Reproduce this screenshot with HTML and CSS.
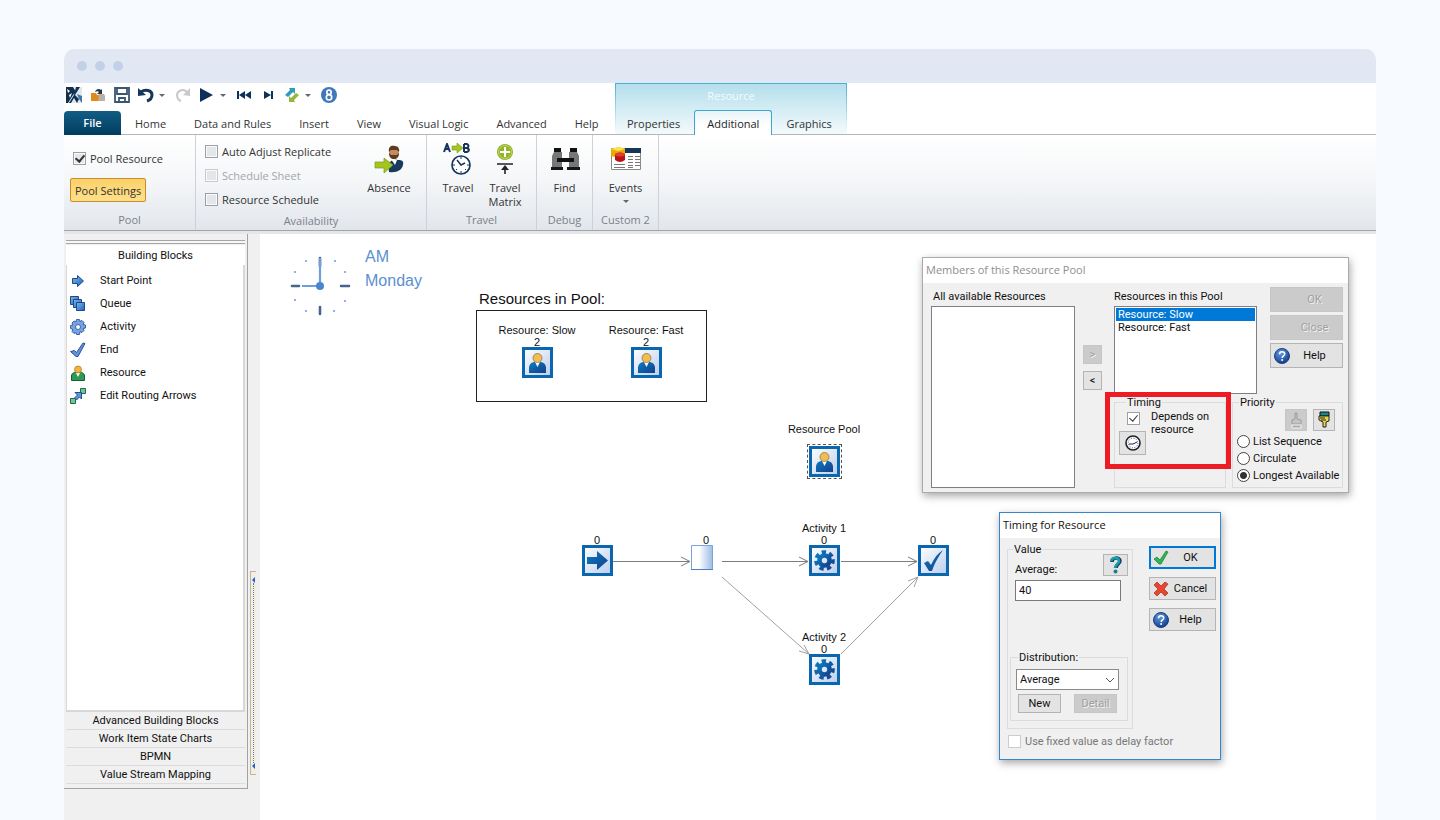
FILE: index.html
```
<!DOCTYPE html>
<html lang="en">
<head>
<meta charset="utf-8">
<title>Resource Pool</title>
<link rel="stylesheet" href="styles.css">
</head>
<body>
<svg class="defs" aria-hidden="true">
  <defs>
    <linearGradient id="blue" x1="0" y1="0" x2="1" y2="1"><stop offset="0" stop-color="#0a7cc0"/><stop offset="1" stop-color="#153f8c"/></linearGradient>
    <linearGradient id="pale" x1="0" y1="0" x2="1" y2="1"><stop offset="0" stop-color="#fff"/><stop offset="1" stop-color="#b9cdec"/></linearGradient>
    <linearGradient id="sky" x1="0" y1="0" x2="1" y2="1"><stop offset="0" stop-color="#7db8ee"/><stop offset="1" stop-color="#1f63b8"/></linearGradient>
    <linearGradient id="queue" x1="0" y1="0" x2="1" y2="0"><stop offset="0.35" stop-color="#fff"/><stop offset="1" stop-color="#9dbce6"/></linearGradient>
    <radialGradient id="ball" cx="0.4" cy="0.3" r="0.7"><stop offset="0" stop-color="#5e9be0"/><stop offset="1" stop-color="#143f92"/></radialGradient>
  </defs>
  <symbol id="frame" viewBox="0 0 31 31"><rect x="1.5" y="1.5" width="28" height="28" fill="url(#pale)" stroke="#0b66b0" stroke-width="3"/></symbol>
  <symbol id="person" viewBox="0 0 31 31"><use href="#frame"/><path d="M7 26v-5c0-4 3-6 6-6h5c3 0 6 2 6 6v5z" fill="url(#blue)"/><path d="M13 15h5l-2.500 5z" fill="#fff"/><circle cx="15.500" cy="11" r="4.500" fill="#f0bd55" stroke="#8b6a2c" stroke-width="0.700"/></symbol>
  <symbol id="gear" viewBox="0 0 31 31"><use href="#frame"/><g fill="none" stroke="url(#blue)"><circle cx="15.500" cy="15.500" r="5" stroke-width="4.600"/><circle cx="15.500" cy="15.500" r="8.200" stroke-width="4.200" stroke-dasharray="4.200 3.160" transform="rotate(-8 15.500 15.500)"/></g></symbol>
  <symbol id="start" viewBox="0 0 31 31"><use href="#frame"/><path d="M5 12h10V6l11 9.500L15 25v-6H5z" fill="url(#blue)"/></symbol>
  <symbol id="check" viewBox="0 0 31 31"><use href="#frame"/><path d="M6 18l4-2 3 4C16 13 20 8 25 5c-4 6-8 12-11 21h-3z" fill="url(#blue)"/></symbol>
  <symbol id="help" viewBox="0 0 16 16"><circle cx="8" cy="8" r="7.500" fill="url(#ball)" stroke="#1f3f78"/><path d="M5.500 6.200c0-3.400 5.200-3.200 5.200-.3 0 2-2.500 2-2.500 4" fill="none" stroke="#fff" stroke-width="1.600"/><circle cx="8.100" cy="12" r="1" fill="#fff"/></symbol>
</svg>

<div class="window">
  <div class="chrome"><i></i><i></i><i></i></div>

  <header class="head">
    <div class="head-main">
      <div class="quick">
        <button class="qb" aria-label="Application"><svg width="16" height="16" viewBox="0 0 16 16"><path d="M0 0h16v16H0z" fill="#dfe8ee"/><path d="M0 0h7l3 5-3 3-5 8H0z" fill="#10304f"/><path d="M10 0h4l-5 8 4 4-2 4-3-5-3 5H3l5-8z" fill="#10304f"/><path d="M1 2l3 2-2 2zM3 8l3-2-2 5z" fill="#fff"/><path d="M11 7l5 2v7l-3-4z" fill="#3f78a8"/></svg></button>
        <button class="qb q-gap" aria-label="Open"><svg width="16" height="16" viewBox="0 0 16 16"><path d="M1 6h5l1 2h2v6H1z" fill="#e08a1c"/><path d="M9 7h5l1 2v5H8z" fill="#b9b0a6"/><path d="M5 5c1-3 4-4 6-2l1-1v5H7l2-2c-1-1-2-1-4 0z" fill="#24384c"/></svg></button>
        <button class="qb q-gap" aria-label="Save"><svg width="16" height="16" viewBox="0 0 16 16" fill="none" stroke="#3a5674" stroke-width="1.800"><path d="M1 1h14v14H1zM3 1v6h10V1M5 15v-4h6v4"/></svg></button>
        <button class="qb q-gap" aria-label="Undo"><svg width="16" height="16" viewBox="0 0 16 16"><path d="M3 5c4-3 11-2 11 3 0 3-2 5-5 6" fill="none" stroke="#17365c" stroke-width="3"/><path d="M0 1v8l8-1z" fill="#17365c"/></svg></button>
        <span class="caret"></span>
        <button class="qb q-gap" aria-label="Redo"><svg width="16" height="16" viewBox="0 0 16 16"><path d="M12 5C8 1 2 4 2 8c0 3 1 5 4 6" fill="none" stroke="#c9c9c9" stroke-width="2"/><path d="M15 1v8l-7-1z" fill="#c9c9c9"/></svg></button>
        <button class="qb q-gap" aria-label="Run"><svg width="16" height="16" viewBox="0 0 16 16"><path d="M1 1l13 7-13 7z" fill="#0d3159"/></svg></button>
        <span class="caret"></span>
        <button class="qb q-gap" aria-label="Reset"><svg width="16" height="16" viewBox="0 0 16 16" fill="#0d3159"><path d="M1 4h2v8H1zM9 4v8L3 8zM15 4v8L9 8z"/></svg></button>
        <button class="qb q-gap" aria-label="Step"><svg width="16" height="16" viewBox="0 0 16 16" fill="#0d3159"><path d="M4 4l7 4-7 4zM11 4h2v8h-2z"/></svg></button>
        <button class="qb q-gap" aria-label="Routes"><svg width="16" height="16" viewBox="0 0 16 16"><path d="M1 8l5-5-1-2h6v6L9 5l-5 5z" fill="#2f9cbc"/><path d="M15 8l-5 5 1 2H5V9l2 2 5-5z" fill="#94b83a"/></svg></button>
        <span class="caret"></span>
        <button class="qb q-gap" aria-label="Simul8"><svg width="16" height="16" viewBox="0 0 16 16"><circle cx="8" cy="8" r="8" fill="#3f78bb"/><g fill="none" stroke="#fff" stroke-width="1.700"><circle cx="8" cy="5.300" r="2.200"/><circle cx="8" cy="10.300" r="2.700"/></g></svg></button>
      </div>
      <nav class="tabs">
        <button class="tab file">File</button><button class="tab">Home</button><button class="tab">Data and Rules</button><button class="tab">Insert</button><button class="tab">View</button><button class="tab">Visual Logic</button><button class="tab">Advanced</button><button class="tab">Help</button>
      </nav>
    </div>
    <div class="head-context">
      <div class="context-name">Resource</div>
      <nav class="tabs">
        <button class="tab">Properties</button><button class="tab active">Additional</button><button class="tab">Graphics</button>
      </nav>
    </div>
  </header>

  <section class="ribbon">
    <div class="group g-pool">
      <div class="group-body stack">
        <label class="tick"><input type="checkbox" checked>Pool Resource</label>
        <button class="pool-btn">Pool Settings</button>
      </div>
      <div class="group-name">Pool</div>
    </div>
    <div class="group g-avail">
      <div class="group-body">
        <div class="ticks">
          <label class="tick"><input type="checkbox">Auto Adjust Replicate</label>
          <label class="tick off"><input type="checkbox" disabled>Schedule Sheet</label>
          <label class="tick"><input type="checkbox">Resource Schedule</label>
        </div>
        <button class="tool"><svg width="32" height="32" viewBox="0 0 32 32"><path d="M15 21c3-4 6-5 10-4 4 0 6 1 5 5-1 5-6 8-14 7z" fill="#183a5e"/><path d="M18 16l4 6 2-5z" fill="#fff"/><circle cx="21" cy="10" r="5" fill="#c58c5b"/><path d="M16 9c-1-6 3-7 6-6 3 0 5 3 4 6l-2-2h-6zM16 10l2 2h6l2-2c0 4-2 6-5 6s-5-2-5-6z" fill="#5c3b22"/><path d="M2 19h9v-4l9 7-9 8v-5H2z" fill="#a4c51e" stroke="#7a9a1a" stroke-width="0.700"/></svg>Absence</button>
      </div>
      <div class="group-name">Availability</div>
    </div>
    <div class="group g-travel">
      <div class="group-body">
        <button class="tool"><svg width="32" height="32" viewBox="0 0 32 32"><g fill="none" stroke="#17345c" stroke-width="2"><path d="M2 9l3-8 3 8M3 6h4M22 1v8M22 1h3q3 2 0 4h-3M25 5q4 2 0 4h-3"/></g><path d="M10 3h5V0l6 5-6 5V7h-5z" fill="#a4c51e" stroke="#7a9a1a" stroke-width="0.600"/><circle cx="19" cy="22" r="9" fill="#fff" stroke="#17345c" stroke-width="1.700"/><path d="M15 17l4 5 4-2" fill="none" stroke="#17345c" stroke-width="1.500"/><path d="M19 14v2M19 28v2M11 22h2M25 22h2M24 27l-1-1M14 27l1-1" stroke="#17345c"/></svg>Travel</button>
        <button class="tool"><svg width="32" height="32" viewBox="0 0 32 32"><circle cx="16" cy="9" r="8" fill="#94b528"/><path d="M16 4v10M11 9h10" stroke="#fff" stroke-width="2"/><circle cx="16" cy="9" r="6.500" fill="none" stroke="#bdd46b"/><path d="M8 21h16M16 31v-7" stroke="#222" stroke-width="1.600"/><path d="M12 27l4-5 4 5z" fill="#222"/></svg>Travel<br>Matrix</button>
      </div>
      <div class="group-name">Travel</div>
    </div>
    <div class="group g-small">
      <div class="group-body">
        <button class="tool"><svg width="32" height="32" viewBox="0 0 32 32"><path d="M5 5h7v4H5zM21 5h7v4h-7z" fill="#111"/><path d="M5 9h8v15H3V13zM20 9h8l2 4v11H20z" fill="#777"/><path d="M8 15h17v4H8z" fill="#111"/><path d="M2 24h12v3H2zM18 24h13v3H18z" fill="#151515"/></svg>Find</button>
      </div>
      <div class="group-name">Debug</div>
    </div>
    <div class="group g-small g-last">
      <div class="group-body">
        <button class="tool"><svg width="32" height="32" viewBox="0 0 32 32"><path d="M1.500 5.500h29v21h-29z" fill="#fff" stroke="#888"/><path d="M15 5h16v5H15z" fill="#17345c"/><path d="M18 13.500h5M25 13.500h5M18 16.500h5M25 16.500h5M18 19.500h5M25 19.500h5M4 21.500h11M18 22.500h5M25 22.500h5M4 24.500h11M18 24.500h5" stroke="#777"/><path d="M1 6l8-2 6 2v7l-7 2-7-2z" fill="#e3b000"/><path d="M1 6l8-2 6 2-7 2z" fill="#ffe04a"/><path d="M5 11q5-3 10 0v6q-5 4-10 0z" fill="#b81212"/><ellipse cx="10" cy="11.500" rx="5" ry="2" fill="#e23b32"/></svg>Events<span class="caret"></span></button>
      </div>
      <div class="group-name">Custom 2</div>
    </div>
  </section>

  <main class="work">
    <aside class="side">
      <div class="panel">
        <div class="grip"></div>
        <button class="side-title">Building Blocks</button>
        <ul class="blocks">
          <li><svg width="16" height="16" viewBox="0 0 16 16"><path d="M2.500 5.500h5v-3l6 5.500-6 5.500v-3h-5z" fill="url(#sky)" stroke="#1c4a86"/></svg>Start Point</li>
          <li><svg width="16" height="16" viewBox="0 0 16 16" fill="url(#sky)" stroke="#1c4a86"><path d="M.5.500h8v8h-8z"/><path d="M3.500 3.500h8v8h-8z"/><path d="M6.500 6.500h8v8h-8z"/></svg>Queue</li>
          <li><svg width="16" height="16" viewBox="0 0 16 16"><path d="M6.500.500h3l.5 2 2-1 2 2-1 2 2.500.500v3l-2.500.500 1 2-2 2-2-1-.5 3h-3L6 13.500l-2 1-2-2 1-2L.500 9.500v-3L3 6 2 4l2-2 2 1z" fill="#75a5e3" stroke="#3d5fa6"/><circle cx="8" cy="8" r="2.500" fill="#fff" stroke="#3d5fa6"/></svg>Activity</li>
          <li><svg width="16" height="16" viewBox="0 0 16 16"><path d="M.5 9.500l4-1 2 2L13 1l2 .5-7 13H6z" fill="#5b93dd" stroke="#344f94"/></svg>End</li>
          <li><svg width="16" height="16" viewBox="0 0 16 16"><path d="M1.500 15.500V11c0-3 3-4 6.500-4s6.500 1 6.500 4v4.500z" fill="#2f9a55" stroke="#1c5d36"/><path d="M6 8h4l-2 4z" fill="#fff"/><circle cx="8" cy="4.500" r="3.500" fill="#f3b43c" stroke="#a87622" stroke-width="0.700"/></svg>Resource</li>
          <li><svg width="16" height="16" viewBox="0 0 16 16"><path d="M10.500.5h5v5h-5zM.5 10.500h5v5h-5z" fill="#6fc79a" stroke="#1f6b48"/><path d="M5 4.500h6.500V11L9.500 9l-3 3-2-2 3-3z" fill="#5b93dd" stroke="#24508f"/></svg>Edit Routing Arrows</li>
        </ul>
        <div class="more">
          <button>Advanced Building Blocks</button>
          <button>Work Item State Charts</button>
          <button>BPMN</button>
          <button>Value Stream Mapping</button>
        </div>
      </div>
      <div class="splitter"><b></b><span></span><b></b></div>
    </aside>

    <section class="canvas">
      <div class="clock">
        <svg width="62" height="62" viewBox="0 0 62 62"><g stroke="#46658f" stroke-width="2.600" stroke-linecap="round"><path d="M31 3v8M31 52v7M3 31h7M52 31h8"/></g><path d="M31 3v28M13 31h18" stroke="#6d9fdc" stroke-width="2.200"/><circle cx="31" cy="31" r="4" fill="#4a86d0"/><g fill="#6fa3df"><circle cx="17" cy="6" r="1.100"/><circle cx="46" cy="6" r="1.100"/><circle cx="6" cy="17" r="1.100"/><circle cx="56" cy="17" r="1.100"/><circle cx="6" cy="45" r="1.100"/><circle cx="56" cy="46" r="1.100"/><circle cx="17" cy="56" r="1.100"/><circle cx="45" cy="56" r="1.100"/></g></svg>
        <div class="when">AM<br>Monday</div>
      </div>

      <svg class="routes" aria-hidden="true"><g fill="none" stroke="#7d7d7d"><path d="M353 330.500h76M421 326l9 4.500-9 4.500M462 330.500h86M539 326l9 4.500-9 4.500M581 330.500h76M648 326l9 4.500-9 4.500"/><path stroke="#a0a0a0" d="M462 346l87 77M539 420l10 3-5-9M581 423l77-77M648 350l10-4-4 10"/></g></svg>

      <div class="pool-title">Resources in Pool:</div>
      <div class="pool-box"></div>
      <div class="node n-slow"><span>Resource: Slow</span><em>2</em><svg><use href="#person"/></svg></div>
      <div class="node n-fast"><span>Resource: Fast</span><em>2</em><svg><use href="#person"/></svg></div>
      <div class="node n-pool"><span>Resource Pool</span><em></em><svg class="picked"><use href="#person"/></svg></div>
      <div class="node n-start"><span></span><em>0</em><svg><use href="#start"/></svg></div>
      <div class="node n-queue"><span></span><em>0</em><svg viewBox="0 0 31 31"><path d="M.5.500h21v24h-21z" fill="url(#queue)" stroke="#7ba3da"/><path d="M0 24.500h22" stroke="#4b7fc4"/></svg></div>
      <div class="node n-act1"><span>Activity 1</span><em>0</em><svg><use href="#gear"/></svg></div>
      <div class="node n-end"><span></span><em>0</em><svg><use href="#check"/></svg></div>
      <div class="node n-act2"><span>Activity 2</span><em>0</em><svg><use href="#gear"/></svg></div>

      <div class="dialog members">
        <h2>Members of this Resource Pool</h2>
        <div class="members-body">
          <div class="field all">
            <label for="all">All available Resources</label>
            <select id="all" size="12"></select>
          </div>
          <div class="movers"><button class="btn off" disabled>&gt;</button><button class="btn">&lt;</button></div>
          <div class="members-right">
            <div class="members-top">
              <div class="field in-pool">
                <label for="inpool">Resources in this Pool</label>
                <select id="inpool" size="6"><option selected>Resource: Slow</option><option>Resource: Fast</option></select>
              </div>
              <div class="members-actions">
                <button class="btn off" disabled>OK</button>
                <button class="btn off" disabled>Close</button>
                <button class="btn with-icon"><svg><use href="#help"/></svg><span>Help</span></button>
              </div>
            </div>
            <div class="members-bottom">
              <fieldset class="timing">
                <legend>Timing</legend>
                <label class="dep"><input type="checkbox" checked><span>Depends on resource</span></label>
                <button class="btn clock-btn" aria-label="Timing"><svg width="16" height="16" viewBox="0 0 16 16"><circle cx="8" cy="8" r="7" fill="#fff" stroke="#222" stroke-width="1.600"/><circle cx="8" cy="8" r="4.800" fill="none" stroke="#3346c8" stroke-dasharray="1 1.500"/><path d="M4 9h4l4-2" fill="none" stroke="#222"/></svg></button>
              </fieldset>
              <fieldset class="priority">
                <legend>Priority</legend>
                <div class="hands">
                  <button class="btn off" disabled aria-label="Raise"><svg width="16" height="18" viewBox="0 0 16 18"><path d="M4 13V9l3-1V2h2v6l4 1v4z" fill="#c4c4c4" stroke="#9c9c9c"/><path d="M4 14h9v3H4z" fill="#aaa" stroke="#f4f4f4"/></svg></button>
                  <button class="btn" aria-label="Lower"><svg width="16" height="18" viewBox="0 0 16 18"><path d="M4 1h9v4H4z" fill="#158b8b" stroke="#111"/><path d="M3 5h10v5l-3 1v5H7v-5L3 9z" fill="#e9d64a" stroke="#222"/><path d="M4 7h5M5 9h5" stroke="#222"/></svg></button>
                </div>
                <label><input type="radio" name="p">List Sequence</label>
                <label><input type="radio" name="p">Circulate</label>
                <label><input type="radio" name="p" checked>Longest Available</label>
              </fieldset>
            </div>
          </div>
        </div>
        <div class="marker"></div>
      </div>

      <div class="dialog timer">
        <h2>Timing for Resource</h2>
        <div class="timer-body">
          <fieldset class="value">
            <legend>Value</legend>
            <div class="avg-row"><label for="avg">Average:</label><button class="btn ask" aria-label="What is this"><svg width="16" height="18" viewBox="0 0 16 18"><path d="M4 6C4 1 12 1 12 5c0 3-4 3-4 7" fill="none" stroke="#1c3564" stroke-width="3.500"/><path d="M3 5C4 1 11 1 11 5c0 3-4 3-4 7" fill="none" stroke="#16a0a8" stroke-width="2.600"/><circle cx="7.500" cy="15.500" r="2" fill="#17808f"/></svg></button></div>
            <input id="avg" type="text" value="40">
            <fieldset class="dist">
              <legend>Distribution:</legend>
              <div class="combo"><select aria-label="Distribution"><option>Average</option></select><svg width="10" height="6" viewBox="0 0 10 6"><path d="M1 1l4 4 4-4" fill="none" stroke="#555"/></svg></div>
              <div class="dist-btns"><button class="btn">New</button><button class="btn off" disabled>Detail</button></div>
            </fieldset>
          </fieldset>
          <div class="timer-actions">
            <button class="btn with-icon main"><svg viewBox="0 0 16 16"><path d="M1 9l3-2 3 3 6-9 2 1-7 12H6z" fill="#2fb457" stroke="#168038" stroke-width="0.700"/></svg><span>OK</span></button>
            <button class="btn with-icon"><svg viewBox="0 0 16 16"><path d="M1 4l3-3 4 4 4-4 3 2-4 5 4 4-3 3-4-4-4 4-3-3 4-4z" fill="#e8472f" stroke="#a82a1a" stroke-width="0.700"/></svg><span>Cancel</span></button>
            <button class="btn with-icon"><svg><use href="#help"/></svg><span>Help</span></button>
          </div>
        </div>
        <label class="fixed"><input type="checkbox" disabled>Use fixed value as delay factor</label>
      </div>
    </section>
  </main>
</div>
</body>
</html>
```
FILE: styles.css
```
* { box-sizing: border-box; }
body {
  margin: 0;
  padding: 49px 64px 0;
  height: 100vh;
  overflow: hidden;
  background: #f7faff;
  font-family: "Open Sans", "Noto Sans", sans-serif;
  font-size: 11px;
  color: #333;
}
button, input, select { font: inherit; color: inherit; margin: 0; }
button { border: 0; padding: 0; background: none; }
svg { display: block; flex: none; }
.defs { position: absolute; width: 0; height: 0; }

.window { height: 100%; display: flex; flex-direction: column; background: #fff; border-radius: 10px 10px 0 0; overflow: hidden; }
.chrome { height: 34px; flex: none; display: flex; align-items: center; gap: 8px; padding: 0 13px; background: #e1e8f4; }
.chrome i { width: 10px; height: 10px; border-radius: 50%; background: #c3d1e8; }

/* quick access bar and tabs */
.head { display: flex; flex: none; height: 52px; border-bottom: 1px solid #b2b7be; }
.head-main { width: 551px; }
.quick { height: 28px; display: flex; align-items: center; padding: 0 2px; padding-bottom: 4px; }
.qb { width: 16px; }
.q-gap { margin-left: 8px; }
.caret { width: 0; height: 0; border: 3px solid transparent; border-top-color: #666; border-bottom: 0; margin: 0 2px 0 5px; }
.tabs { display: flex; height: 24px; }
.tab { padding: 0 14px; height: 24px; line-height: 26px; white-space: nowrap; }
.file { width: 57px; border-radius: 4px 4px 0 0; background: linear-gradient(#125e86, #013c5e); color: #fff; font-weight: 600; line-height: 24px; }
.head-context { width: 232px; border: 1px solid #5ab8d4; border-bottom: 0; border-image: linear-gradient(#45b0d0, #fff) 1; background: linear-gradient(#b4dfec, #f4fafc); }
.context-name { height: 26px; line-height: 24px; text-align: center; color: #f2fbff; }
.head-context .tabs { height: 26px; }
.head-context .tab { padding: 0 11px; height: 26px; line-height: 28px; }
.head-context .active { height: 26px; line-height: 26px; padding: 0 12px; margin: 0 3px 0 3px; background: linear-gradient(#e8f4f8, #fff 60%); border: 1px solid #3aa9cd; border-bottom: 0; border-radius: 3px 3px 0 0; color: #222; }

/* ribbon */
.ribbon { display: flex; flex: none; height: 96px; background: linear-gradient(#fff, #f4f6f8 50%, #e2e6eb); border-bottom: 1px solid #a0a6ad; }
.group { display: flex; flex-direction: column; border-right: 1px solid #cdd2d8; }
.g-pool { width: 132px; }
.g-avail { width: 231px; }
.g-travel { width: 110px; }
.g-small { width: 56px; }
.g-last { width: 66px; }
.group-body { display: flex; flex: 1; padding: 4px 6px 0; justify-content: center; }
.group-name { height: 20px; line-height: 20px; text-align: center; color: #7b818a; }
.stack { flex-direction: column; justify-content: flex-start; align-items: flex-start; padding-top: 12px; gap: 8px; }
.stack .tick { padding-left: 3px; }
.tick { display: flex; align-items: center; gap: 4px; height: 23px; white-space: nowrap; }
input[type=checkbox] { appearance: none; width: 13px; height: 13px; flex: none; border: 1px solid #9aa0a6; background: #fff; position: relative; }
.tick input { background: #e4e7ea; box-shadow: inset 0 0 0 1px #fafafa; }
.tick input:disabled { border-color: #c8ccd0; }
.off { color: #a2a6aa; }
input[type=checkbox]:checked::after { content: ""; position: absolute; left: 3px; top: 0; width: 4px; height: 7px; border: solid #333; border-width: 0 2px 2px 0; transform: rotate(40deg); }
.pool-btn { height: 24px; padding: 0 4px; border: 1px solid #c98b2c; border-radius: 2px; background: linear-gradient(#fbd26a, #ffe08a); }
.ticks { flex: 1; padding-left: 3px; }
.ticks .tick { height: 24px; }
.tool { width: 52px; display: flex; flex-direction: column; align-items: center; line-height: 14px; padding-top: 4px; }
.g-avail .tool { width: 62px; }
.g-travel .tool { width: 47px; }
.tool svg { margin-bottom: 6px; }
.tool .caret { margin: 5px 0 0; }

/* side panel */
.work { flex: 1; display: flex; min-height: 0; border-top: 3px solid #e4e6e9; font-family: Roboto, "Liberation Sans", sans-serif; font-size: 11px; color: #111; }
.side { width: 196px; flex: none; display: flex; background: #f0f0f0; padding-bottom: 31px; }
.panel { width: 184px; display: flex; flex-direction: column; padding: 6px 2px 4px; border-right: 1px solid #a2a2a2; border-bottom: 1px solid #a2a2a2; }
.grip { height: 4px; flex: none; border: solid #a6a6a6; border-width: 1px 0; background: #f7f7f7; }
.side-title { height: 20px; flex: none; background: #fff; margin-top: 1px; padding-top: 1px; }
.blocks { flex: 1; margin: 0; padding: 4px 4px 0 3px; list-style: none; background: #fff; border: solid #d8d8d8; border-width: 0 2px 2px 1px; }
.blocks li { display: flex; align-items: center; gap: 14px; height: 23px; }
.more { flex: none; }
.more button { display: block; width: 100%; height: 18px; line-height: 18px; border-bottom: 1px solid #dcdcdc; }
.splitter { width: 6px; margin: 0 0 14px 2px; align-self: flex-end; height: 204px; display: flex; flex-direction: column; justify-content: space-between; align-items: center; padding: 5px 0; border: 1px solid #bdb69c; border-right: 0; background: #f3efdf; }
.splitter b { border: 3px solid transparent; border-right-color: #2460d8; border-left: 0; }
.splitter span { flex: 1; border-left: 1px dotted #5a78b8; }

/* simulation canvas */
.canvas { flex: 1; position: relative; overflow: hidden; font-family: "Liberation Sans", Arial, sans-serif; }
.clock { position: absolute; left: 29px; top: 11px; display: flex; gap: 14px; }
.clock svg { margin-top: 10px; }
.when { font-size: 16px; line-height: 24px; color: #5a8fd2; }
.routes { position: absolute; left: 0; top: -3px; width: 100%; height: 100%; overflow: visible; }
.pool-title { position: absolute; left: 219px; top: 56px; font-size: 15px; line-height: 18px; }
.pool-box { position: absolute; left: 216px; top: 76px; width: 231px; height: 92px; border: 1px solid #222; }
.node { position: absolute; width: 80px; display: flex; flex-direction: column; align-items: center; line-height: 12px; white-space: nowrap; }
.node span { height: 12px; }
.node em { height: 11px; line-height: 12px; font-style: normal; }
.node svg { width: 31px; height: 31px; }
.node .picked { outline: 1px dashed #555; outline-offset: 1px; }
.n-slow { left: 237px; top: 90px; }
.n-fast { left: 346px; top: 90px; }
.n-pool { left: 524px; top: 189px; }
.n-start { left: 297px; top: 288px; }
.n-queue { left: 406px; top: 288px; }
.n-act1 { left: 524px; top: 288px; }
.n-end { left: 633px; top: 288px; }
.n-act2 { left: 524px; top: 397px; }

/* dialogs */
.dialog { position: absolute; background: #f0f0f0; border: 1px solid #aaa; box-shadow: 1px 3px 8px rgba(0, 0, 0, 0.35); font-family: Roboto, "Liberation Sans", sans-serif; line-height: 13px; }
.dialog h2 { margin: 0; height: 25px; padding: 0 3px; background: #fff; font: 11px/23px "Open Sans", "Noto Sans", sans-serif; }
.members { left: 662px; top: 23px; width: 427px; height: 236px; }
.members h2 { color: #8e8e8e; }
.members-body { display: flex; padding: 4px 5px 5px 8px; }
.members-right { flex: 1; margin-left: 12px; }
.members-top, .members-bottom { display: flex; }
.field { display: flex; flex-direction: column; }
.field label { height: 19px; line-height: 20px; }
.all label { padding-left: 2px; }
.field select { overflow: hidden; border: 1px solid #7a7f88; border-radius: 0; background: #fff; padding: 1px; outline: 0; }
.all { width: 144px; }
.all select { height: 182px; }
.in-pool { width: 143px; }
.in-pool select { height: 88px; }
option { min-height: 13px; line-height: 13px; padding: 0 2px; }
.in-pool option:checked { background: #0078d7 linear-gradient(#0078d7, #0078d7); color: #fff; -webkit-text-fill-color: #fff; }
.btn { display: flex; align-items: center; justify-content: center; border: 1px solid #b4b4b4; background: #e3e3e3; color: #111; }
.btn.off { background: #cbcbcb; border-color: #c6c6c6; color: #a0a0a0; text-shadow: 1px 1px #f2f2f2; }
.movers { margin: 58px 0 0 8px; display: flex; flex-direction: column; gap: 7px; }
.movers .btn { width: 19px; height: 19px; }
.members-actions { display: flex; flex-direction: column; gap: 3px; margin: 0 0 0 13px; flex: 1; }
.members-actions .btn { height: 25px; padding-left: 16px; }
.members-actions .with-icon, .btn.with-icon { justify-content: flex-start; padding: 0 3px; }
.with-icon svg { width: 16px; height: 16px; }
.with-icon span { flex: 1; text-align: center; }
fieldset { margin: 0; padding: 0; min-width: 0; border: 1px solid #dcdcdc; }
legend { padding: 0 1px; margin-left: 7px; line-height: 13px; }
.members-bottom { margin-top: 2px; gap: 6px; }
.members-bottom fieldset { height: 92px; }
.timing { width: 112px; padding-left: 4px; }
.dep { display: flex; gap: 11px; align-items: flex-start; padding: 1px 4px 0 8px; margin-bottom: -5px; }
.dep input { margin-top: 2px; }
.dialog input[type=checkbox]:checked::after { border-width: 0 1px 1px 0; }
.clock-btn { width: 27px; height: 24px; }
.priority { flex: 1; }
.priority legend { margin-left: 6px; }
.hands { display: flex; justify-content: flex-end; gap: 6px; padding-right: 7px; margin-bottom: 2px; }
.hands .btn { width: 22px; height: 22px; }
.priority label { display: flex; align-items: center; gap: 3px; height: 17px; padding-left: 4px; white-space: nowrap; }
input[type=radio] { appearance: none; width: 13px; height: 13px; border: 1px solid #444; border-radius: 50%; background: #fff; }
input[type=radio]:checked { background: radial-gradient(#333 3px, #fff 4px); }
.marker { position: absolute; left: 182px; top: 134px; width: 126px; height: 77px; border: 5px solid #ed1c24; }

.timer { left: 739px; top: 278px; width: 222px; height: 248px; border-color: #3487cc; }
.timer-body { display: flex; gap: 16px; padding: 5px 4px 0 7px; }
.value { width: 126px; height: 186px; padding: 0 4px 0 2px; }
.value > legend { margin-left: 3px; }
.avg-row { display: flex; justify-content: space-between; padding-left: 5px; }
.avg-row label { padding-top: 7px; }
.ask { width: 25px; height: 22px; margin-top: -2px; }
.value > input { display: block; width: 106px; height: 21px; margin: 4px 0 50px 5px; padding: 0 3px; border: 1px solid #7a7a7a; background: #fff; }
.dist { height: 70px; padding: 5px 8px 0 5px; }
.dist legend { margin-left: 2px; }
.combo { position: relative; }
.combo select { appearance: none; width: 100%; height: 21px; padding: 0 3px; border: 1px solid #8a8a8a; border-radius: 0; background: #fff; }
.combo svg { position: absolute; right: 4px; top: 8px; }
.dist-btns { display: flex; justify-content: space-between; padding: 4px 2px 0; }
.dist-btns .btn { width: 43px; height: 19px; }
.timer-actions { flex: 1; display: flex; flex-direction: column; gap: 8px; padding-top: 3px; }
.timer-actions .btn { height: 23px; }
.timer-actions .main { border: 2px solid #0078d7; padding: 0 2px; }
.fixed { display: flex; align-items: center; gap: 4px; padding: 6px 0 0 8px; color: #777; }
.fixed input { border-color: #ccc; }
```
